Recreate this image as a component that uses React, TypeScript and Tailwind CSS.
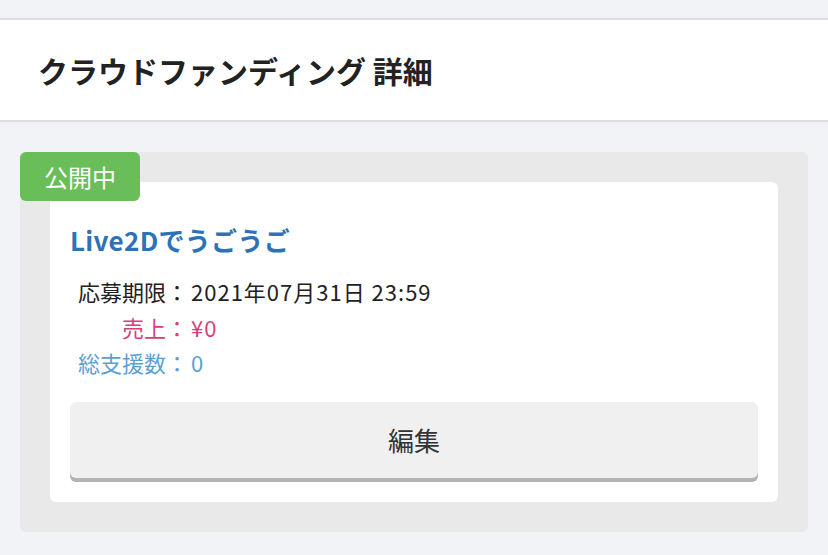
import React from 'react';

interface Row {
  label: string;
  value: string;
  color: string;
}

const rows: Row[] = [
  { label: '応募期限：', value: '2021年07月31日 23:59', color: 'text-[#222222]' },
  { label: '売上：', value: '¥0', color: 'text-[#d4407a]' },
  { label: '総支援数：', value: '0', color: 'text-[#5a9fd4]' },
];

export default function App() {
  return (
    <div className="min-h-[555px] bg-[#f2f3f7] pt-[18px] font-['Noto_Sans_CJK_JP','Noto_Sans',sans-serif]">
      {/* Header */}
      <header className="flex h-[104px] items-center border-y-2 border-[#dedede] bg-white pl-[38px]">
        <h1 className="text-[30px] font-bold leading-none text-[#222222]">クラウドファンディング 詳細</h1>
      </header>

      {/* Panel */}
      <div className="px-5 pt-[30px]">
        <div className="relative rounded-[6px] bg-[#e9e9e9] p-[30px]">
          <span className="absolute left-0 top-0 flex h-[49px] w-[120px] items-center justify-center rounded-[6px] bg-[#6abe5a] text-[24px] leading-none text-white">
            公開中
          </span>

          <div className="rounded-[6px] bg-white px-5 pb-6 pt-10">
            <h2 className="text-[26px] font-bold leading-[36px] tracking-[0.3px] text-[#2d72b8]">Live2Dでうごうご</h2>

            <dl className="ml-2 mt-4 grid grid-cols-[110px_1fr] text-[22px] leading-[35.5px]">
              {rows.map((row) => (
                <React.Fragment key={row.label}>
                  <dt className={`text-right ${row.color}`}>{row.label}</dt>
                  <dd className={`pl-[3px] tracking-[1px] ${row.color}`}>{row.value}</dd>
                </React.Fragment>
              ))}
            </dl>

            <button className="mt-[21px] flex h-[76px] w-full items-center justify-center rounded-[6px] bg-[#f0f0f0] text-[26px] text-[#333333] shadow-[0_4px_0_#b3b3b3]">
              編集
            </button>
          </div>
        </div>
      </div>
    </div>
  );
}
